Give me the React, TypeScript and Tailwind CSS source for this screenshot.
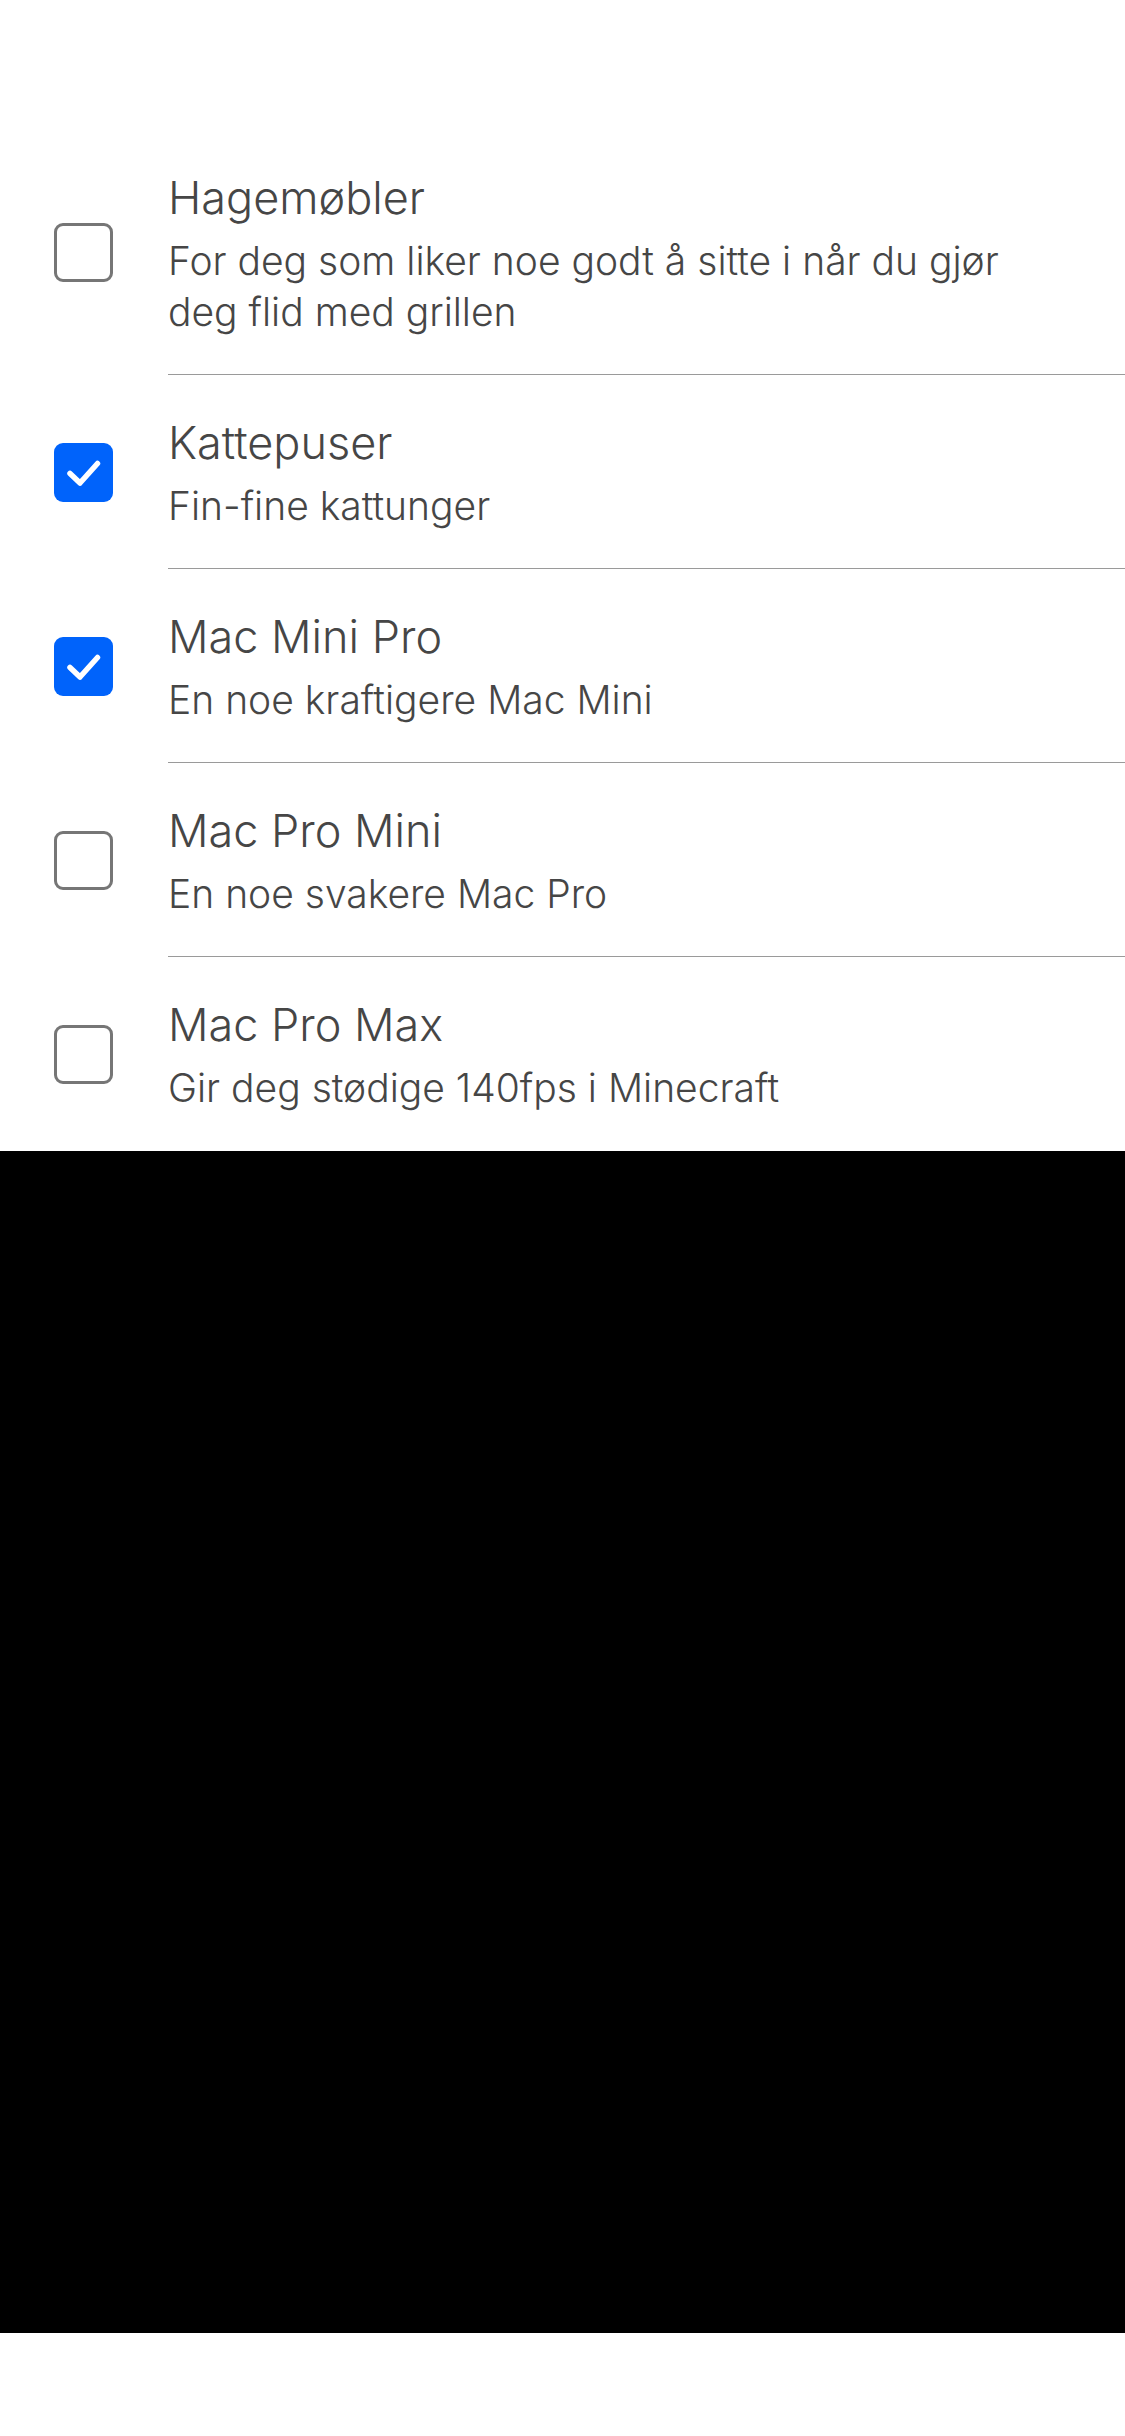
import React from "react";

type Item = {
    title: string;
    description: string;
    checked: boolean;
};

const items: Item[] = [
    { title: "Hagemøbler", description: "For deg som liker noe godt å sitte i når du gjør deg flid med grillen", checked: false },
    { title: "Kattepuser", description: "Fin-fine kattunger", checked: true },
    { title: "Mac Mini Pro", description: "En noe kraftigere Mac Mini", checked: true },
    { title: "Mac Pro Mini", description: "En noe svakere Mac Pro", checked: false },
    { title: "Mac Pro Max", description: "Gir deg stødige 140fps i Minecraft", checked: false },
];

function Checkbox({ checked }: { checked: boolean }) {
    if (checked) {
        return (
            <div className="w-[59px] h-[59px] rounded-[9px] bg-[#0063fb] flex items-center justify-center shrink-0">
                <svg width="59" height="59" viewBox="0 0 59 59" fill="none">
                    <path d="M16 30.5 L26 40 L43.5 20.5" stroke="#ffffff" strokeWidth="5.5" strokeLinecap="round" strokeLinejoin="round" />
                </svg>
            </div>
        );
    }
    return <div className="w-[59px] h-[59px] rounded-[9px] border-[3px] border-[#767676] bg-white shrink-0" />;
}

function Row({ item, last }: { item: Item; last: boolean }) {
    return (
        <label className="flex items-center">
            <div className="pl-[54px] pr-[55px] flex items-center">
                <Checkbox checked={item.checked} />
            </div>
            <div className={`flex-1 pt-[38px] pr-[80px] ${last ? "pb-[38px]" : "pb-[37px] border-b border-[#9a9a9a]"}`}>
                <div className="text-[45px] leading-[60px] font-light text-[#464646] mb-[7px]">{item.title}</div>
                <div className="text-[39px] leading-[51px] font-light text-[#464646]">{item.description}</div>
            </div>
        </label>
    );
}

export default function App() {
    return (
        <div className="w-[1125px] bg-white" style={{ fontFamily: "Inter, 'Noto Sans', sans-serif" }}>
            <div className="pt-[130px]">
                {items.map((item, i) => (
                    <Row key={item.title} item={item} last={i === items.length - 1} />
                ))}
            </div>
            <div className="h-[1182px] bg-black" />
            <div className="h-[102px] bg-white" />
        </div>
    );
}
